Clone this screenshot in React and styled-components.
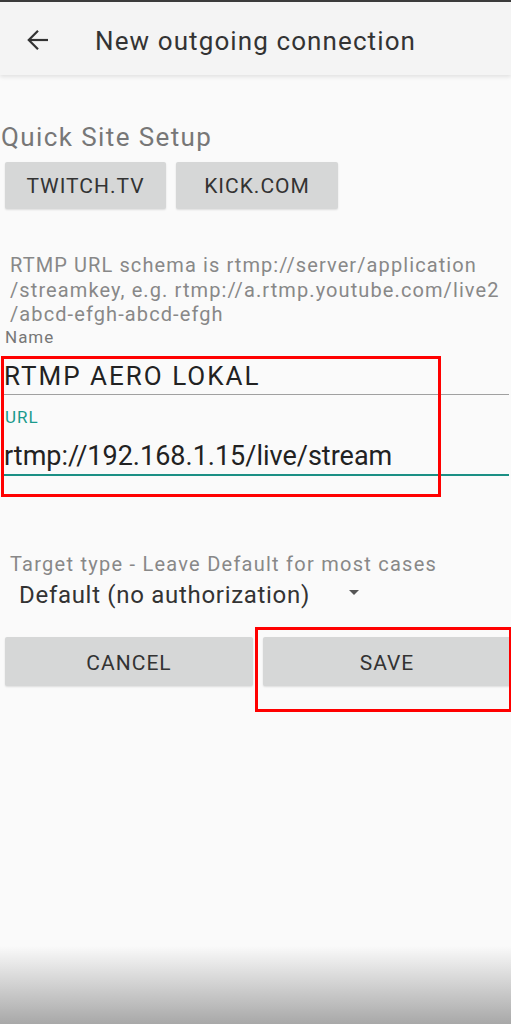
import React from "react";
import styled, { createGlobalStyle } from "styled-components";

const GlobalStyle = createGlobalStyle`
  html, body {
    margin: 0;
    padding: 0;
    background: #fafafa;
  }
  body {
    font-family: Roboto, "Liberation Sans", Arial, sans-serif;
  }
`;

const Page = styled.div`
  position: relative;
  min-height: 100vh;
  background: #fafafa;
  overflow: hidden;
`;

const TopLine = styled.div`
  height: 2px;
  background: #3c3c3c;
`;

const AppBar = styled.header`
  height: 73px;
  display: flex;
  align-items: center;
  padding-left: 25px;
  background: #f4f4f4;
  box-shadow: 0 2px 4px rgba(0, 0, 0, 0.1);
  position: relative;
  z-index: 1;
`;

const BackButton = styled.button`
  width: 26px;
  height: 26px;
  padding: 0;
  border: 0;
  background: none;
  display: flex;
  align-items: center;
  justify-content: center;
  color: #333;
  margin-top: 2px;
`;

const Title = styled.h1`
  margin: 0 0 0 44px;
  padding-top: 5px;
  font-size: 26px;
  line-height: 30px;
  font-weight: 400;
  letter-spacing: 1.1px;
  color: #333;
`;

const Main = styled.main`
  display: flex;
  flex-direction: column;
`;

const SectionTitle = styled.h2`
  margin: 47px 0 0 1px;
  font-size: 26px;
  line-height: 30px;
  font-weight: 400;
  letter-spacing: 1.4px;
  color: #777;
`;

const ButtonRow = styled.div`
  display: flex;
  gap: 10px;
  padding-left: 5px;
  margin-top: ${(p) => p.$top}px;
`;

const FlatButton = styled.button`
  height: ${(p) => p.$height || 47}px;
  width: ${(p) => (p.$width ? `${p.$width}px` : "100%")};
  flex: ${(p) => (p.$width ? "none" : 1)};
  border: 0;
  border-radius: 2px;
  background: #d6d7d7;
  box-shadow: 0 1px 2px rgba(0, 0, 0, 0.12);
  font-family: inherit;
  font-size: 21px;
  letter-spacing: 1px;
  color: #333;
  text-transform: uppercase;
  padding: ${(p) => p.$nudge || 0}px 0 0;
`;

const HelpText = styled.p`
  margin: ${(p) => p.$top}px 0 0 10px;
  font-size: 20px;
  line-height: 24.5px;
  letter-spacing: 1.1px;
  color: #888;
`;

const FieldLabel = styled.label`
  display: block;
  margin: ${(p) => p.$top || 0}px 0 0 5px;
  font-size: 17px;
  line-height: 20px;
  letter-spacing: 1px;
  color: ${(p) => (p.$active ? "#1a9a8c" : "#777")};
`;

const FieldGroup = styled.div`
  position: relative;
  margin: 13px 2px 0 4px;
`;

const Input = styled.div`
  font-size: ${(p) => p.$size}px;
  line-height: 32px;
  letter-spacing: ${(p) => p.$spacing || 0}px;
  color: #222;
  padding-bottom: 2px;
  border-bottom: ${(p) => (p.$active ? "2px solid #1b8f84" : "1.5px solid #a0a0a0")};
  white-space: nowrap;
`;

const InputSlot = styled.div`
  margin-top: 12.5px;
`;

const Highlight = styled.div`
  position: absolute;
  top: ${(p) => p.$top}px;
  left: ${(p) => p.$left}px;
  width: ${(p) => p.$w}px;
  height: ${(p) => p.$h}px;
  border: 3px solid #f00;
  box-sizing: border-box;
  pointer-events: none;
`;

const TargetLabel = styled.div`
  margin: 76px 0 0 10px;
  font-size: 20px;
  line-height: 24px;
  letter-spacing: 1.25px;
  color: #888;
`;

const Select = styled.div`
  margin: 5px 0 0 19px;
  width: 340px;
  display: flex;
  align-items: center;
  justify-content: space-between;
  font-size: 24px;
  line-height: 28px;
  letter-spacing: 0.7px;
  color: #333;
`;

const Caret = styled.span`
  width: 0;
  height: 0;
  border-left: 5px solid transparent;
  border-right: 5px solid transparent;
  border-top: 5px solid #555;
  margin-bottom: 5px;
`;

const ButtonSlot = styled.div`
  position: relative;
  flex: 1;
  display: flex;
`;

const BottomShade = styled.div`
  position: absolute;
  left: 0;
  right: 0;
  bottom: 0;
  height: 78px;
  background: linear-gradient(rgba(168, 168, 168, 0), rgba(168, 168, 168, 1));
  pointer-events: none;
`;

function ArrowBack() {
  return (
    <svg width="22" height="22" viewBox="0 0 22 22" fill="none" stroke="currentColor" strokeWidth="2.2">
      <path d="M21 11H2" />
      <path d="M11 1.8L1.8 11l9.2 9.2" />
    </svg>
  );
}

export default function App() {
  return (
    <Page>
      <GlobalStyle />
      <TopLine />
      <AppBar>
        <BackButton aria-label="Back">
          <ArrowBack />
        </BackButton>
        <Title>New outgoing connection</Title>
      </AppBar>

      <Main>
        <SectionTitle>Quick Site Setup</SectionTitle>
        <ButtonRow $top={10}>
          <FlatButton $width={161}>Twitch.tv</FlatButton>
          <FlatButton $width={162}>Kick.com</FlatButton>
        </ButtonRow>

        <HelpText $top={44}>
          RTMP URL schema is rtmp://server/application
          <br />
          /streamkey, e.g. rtmp://a.rtmp.youtube.com/live2
          <br />
          /abcd-efgh-abcd-efgh
        </HelpText>

        <FieldLabel>Name</FieldLabel>
        <FieldGroup>
          <Input $size={26} $spacing={2}>
            RTMP AERO LOKAL
          </Input>
          <FieldLabel $top={12.5} $active style={{ marginLeft: 1 }}>
            URL
          </FieldLabel>
          <InputSlot>
            <Input $size={27} $active>
              rtmp://192.168.1.15/live/stream
            </Input>
          </InputSlot>
          <Highlight $top={-4} $left={-3} $w={440} $h={141} />
        </FieldGroup>

        <TargetLabel>Target type - Leave Default for most cases</TargetLabel>
        <Select>
          <span>Default (no authorization)</span>
          <Caret />
        </Select>

        <ButtonRow $top={28}>
          <ButtonSlot>
            <FlatButton $height={49} $nudge={4}>
              Cancel
            </FlatButton>
          </ButtonSlot>
          <ButtonSlot>
            <FlatButton $height={49} $nudge={4}>
              Save
            </FlatButton>
            <Highlight $top={-10} $left={-8} $w={257} $h={85} />
          </ButtonSlot>
        </ButtonRow>
      </Main>

      <BottomShade />
    </Page>
  );
}
